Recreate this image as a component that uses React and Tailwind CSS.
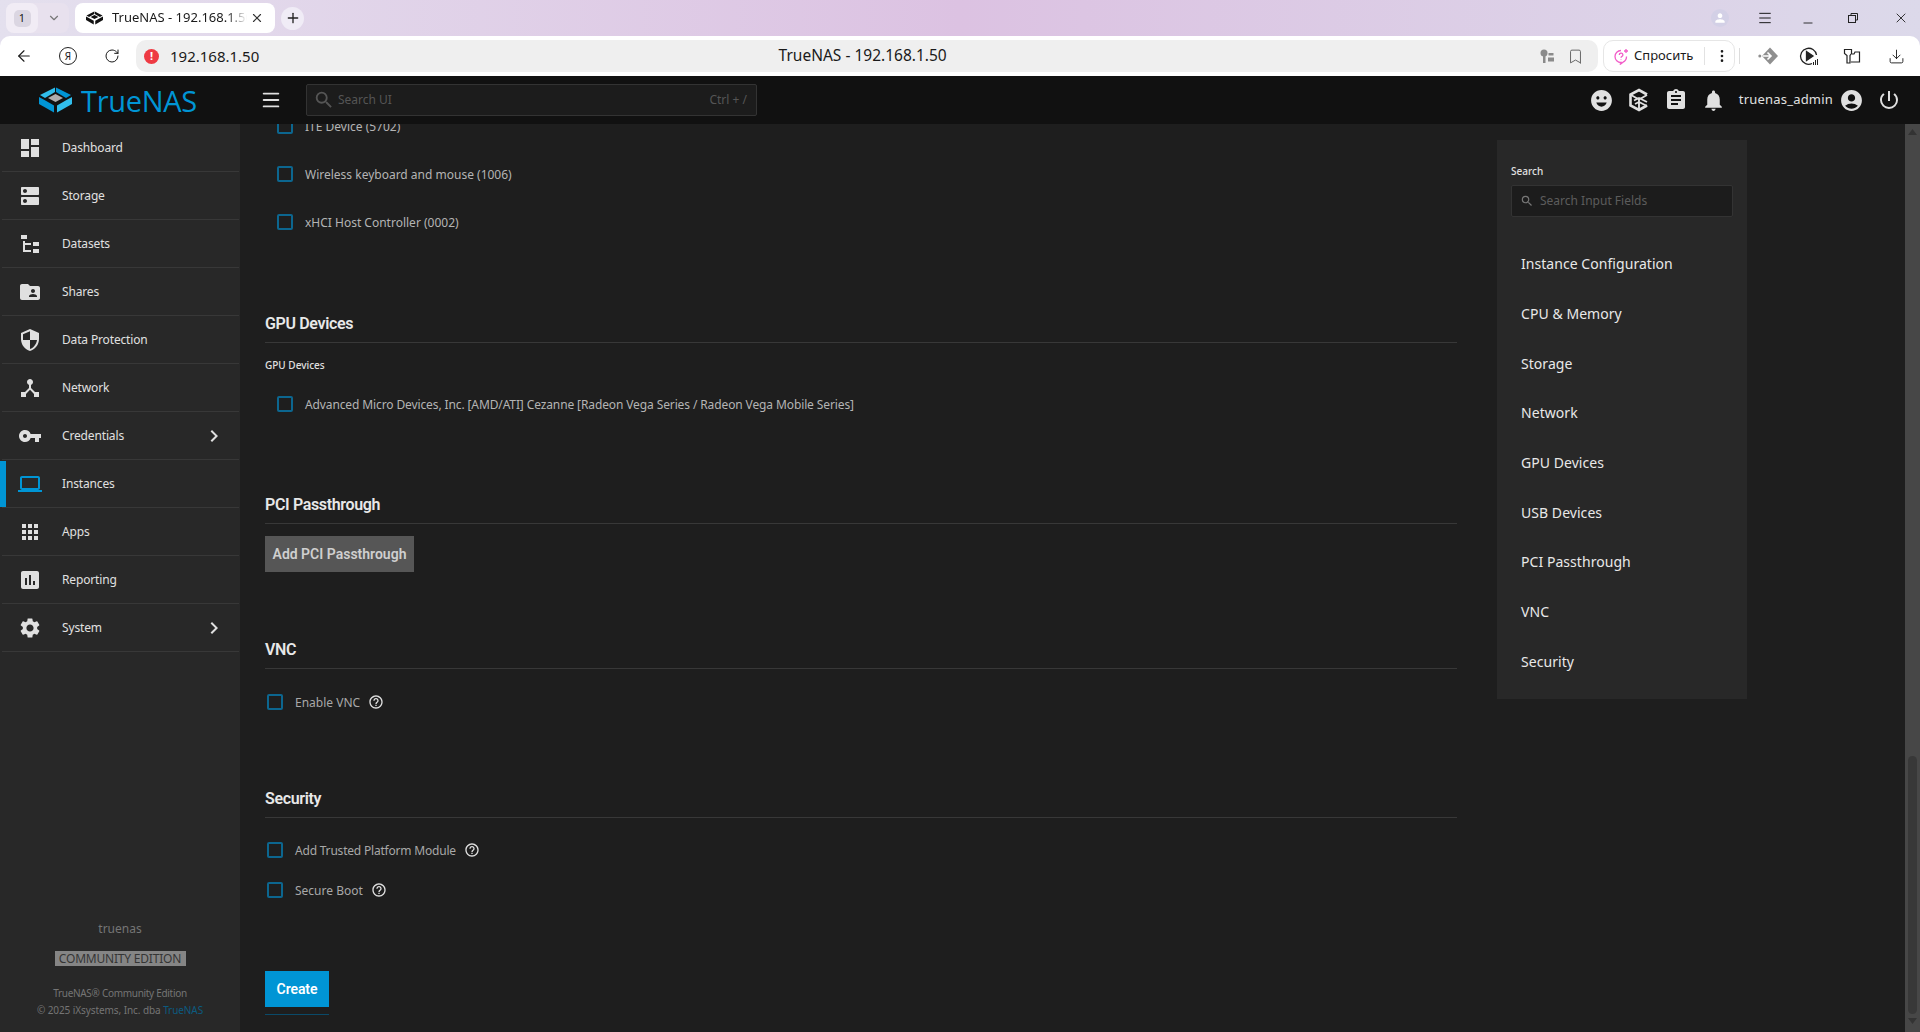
import React from "react";
import { ArrowLeft, RotateCw, Bookmark, ChevronDown, Plus, X, Menu, Minus, MoreVertical, Download } from "lucide-react";
import {
  MdDashboard, MdDns, MdFolderShared, MdSecurity, MdDeviceHub, MdVpnKey, MdLaptop, MdApps,
  MdAssessment, MdSettings, MdChevronRight, MdSearch, MdHelpOutline, MdEmojiEmotions, MdAssignment,
  MdNotifications, MdAccountCircle, MdPowerSettingsNew, MdPerson,
} from "react-icons/md";

const FileTree = ({ size = 24, className = "" }) => (
  <svg width={size} height={size} viewBox="0 0 24 24" fill="currentColor" className={className}>
    <path d="M3,3H9V7H3V3M15,10H21V14H15V10M15,17H21V21H15V17M13,13H7V18H13V20H7L5,20V9H7V11H13V13Z" />
  </svg>
);

const navItems = [
  { label: "Dashboard", icon: MdDashboard },
  { label: "Storage", icon: MdDns },
  { label: "Datasets", icon: FileTree },
  { label: "Shares", icon: MdFolderShared },
  { label: "Data Protection", icon: MdSecurity },
  { label: "Network", icon: MdDeviceHub },
  { label: "Credentials", icon: MdVpnKey, more: true },
  { label: "Instances", icon: MdLaptop, active: true },
  { label: "Apps", icon: MdApps },
  { label: "Reporting", icon: MdAssessment },
  { label: "System", icon: MdSettings, more: true },
];

const anchors = ["Instance Configuration", "CPU & Memory", "Storage", "Network", "GPU Devices", "USB Devices", "PCI Passthrough", "VNC", "Security"];

const Logo = ({ mono, className }) => (
  <svg viewBox="0 0 33 26" className={className}>
    <polygon points="16,0.5 1,8 6,11 16,5" fill={mono ? "#111" : "#31beec"} />
    <polygon points="17,0.5 32,8 27,11 17,5" fill={mono ? "#111" : "#0095d5"} />
    <polygon points="16.5,7 24,11 16.5,15 9,11" fill={mono ? "#111" : "#aeadae"} />
    <polygon points="0,10 5.5,13 15,18.5 15,25.5 0,17" fill={mono ? "#111" : "#0095d5"} />
    <polygon points="33,10 27.5,13 18,18.5 18,25.5 33,17" fill={mono ? "#111" : "#31beec"} />
  </svg>
);

const TrueCommandIcon = () => (
  <svg viewBox="0 0 24 24" className="w-[24px] h-[24px]" fill="none" stroke="#e0e0e0" strokeWidth="2.6">
    <path d="M20 6.500 12 2 3.500 6.500v11L12 22l8-4.500" />
    <path d="M4 7l8 4.500L20 7M12 11.500V21M7 12.500l5-2.500 8 4M8 16l4-2 8 4" strokeWidth="1.9" />
  </svg>
);

const Checkbox = () => <span className="w-[16px] h-[16px] shrink-0 rounded-[2px] border-2 border-[#0c668f]" />;

const DeviceRow = ({ label, className = "", textClass = "" }) => (
  <div className={`h-[48px] flex items-center pl-[12px] gap-[12px] text-[12px] text-[#b4b4b4] ${className}`}>
    <Checkbox />
    <span className={`pt-px ${textClass}`}>{label}</span>
  </div>
);

const CheckRow = ({ label, textClass = "" }) => (
  <div className="h-[40px] flex items-center pl-[2px] gap-[12px] text-[12px] text-[#a8a8a8]">
    <Checkbox />
    <span className={`pt-px ${textClass}`}>{label}</span>
    <MdHelpOutline size={16} className="text-[#e0e0e0] -ml-[4px]" />
  </div>
);

const SectionTitle = ({ children, className = "" }) => (
  <div className={`h-[39px] pt-[2px] flex items-center border-b border-[#383838] font-['Roboto',sans-serif] text-[16px] font-semibold tracking-[-0.35px] text-[#e8e8e8] ${className}`}>
    {children}
  </div>
);

const BrowserChrome = () => (
  <div className="h-[76px] shrink-0 flex flex-col bg-gradient-to-r from-[#e4e0ee] via-[#dcc2e2] to-[#dcd9ea] font-['Noto_Sans',sans-serif] text-[#1a1a1a]">
    <div className="h-[36px] flex items-center pl-[6px] pr-[11px]">
      <div className="w-[63px] h-[30px] flex items-center rounded-lg bg-[#e8e1ee]">
        <span className="w-[32px] h-[30px] rounded-lg bg-[#f1ecf5] flex items-center justify-center">
          <span className="w-[17px] h-[17px] rounded-[5px] bg-[#dbd6e2] flex items-center justify-center text-[11px]">1</span>
        </span>
        <ChevronDown size={14} className="ml-[9px] text-[#777]" />
      </div>
      <div className="ml-[6px] w-[200px] h-[30px] flex items-center rounded-lg bg-white pl-[11px] pr-[11px]">
        <Logo mono className="w-[17px] h-[14px] shrink-0" />
        <span className="ml-[9px] text-[13px] whitespace-nowrap overflow-hidden w-[135px] [mask-image:linear-gradient(to_right,black_85%,transparent)]">TrueNAS - 192.168.1.50</span>
        <X size={14} className="ml-auto text-[#333]" />
      </div>
      <div className="ml-[6px] w-[23px] h-[23px] rounded-full bg-[#f0ecf6] flex items-center justify-center">
        <Plus size={16} className="text-[#222]" />
      </div>
      <div className="ml-auto flex items-center">
        <span className="w-[18px] h-[18px] rounded-full bg-[#d3d0e6] flex items-center justify-center">
          <MdPerson size={14} className="text-white" />
        </span>
        <Menu size={16} strokeWidth={1.5} className="ml-[28px]" />
        <Minus size={14} strokeWidth={1.5} className="ml-[28px] mt-[10px]" />
        <svg width="12" height="12" viewBox="0 0 12 12" fill="none" stroke="#222" className="ml-[32px]">
          <rect x="1.5" y="3.5" width="7" height="7" />
          <path d="M4 3V1.500h6.500V8H9" />
        </svg>
        <X size={16} strokeWidth={1.3} className="ml-[34px]" />
      </div>
    </div>
    <div className="h-[40px] bg-white rounded-t-[10px] flex items-center pl-[15px]">
      <ArrowLeft size={18} strokeWidth={1.5} />
      <span className="ml-[26px] w-[18px] h-[18px] rounded-full border border-[#222] flex items-center justify-center text-[10px]">Я</span>
      <RotateCw size={16} strokeWidth={1.5} className="ml-[27px]" />
      <div className="ml-[16px] w-[1462px] h-[32px] rounded-[10px] bg-[#efefef] flex items-center pl-[8px] pr-[14px]">
        <span className="w-[15px] h-[15px] rounded-full bg-[#ee3a43] text-white text-[11px] font-bold flex items-center justify-center">!</span>
        <span className="ml-[11px] text-[15px]">192.168.1.50</span>
        <span className="flex-1 text-center text-[15.5px] pr-[74px]">TrueNAS - 192.168.1.50</span>
        <svg width="14" height="14" viewBox="0 0 14 14" fill="#8a8a8a">
          <circle cx="4" cy="4" r="3.5" />
          <rect x="3" y="6" width="2.5" height="8" />
          <rect x="8.5" y="4" width="5" height="2.5" />
          <rect x="8" y="8.5" width="6" height="4" />
        </svg>
        <Bookmark size={17} strokeWidth={1.4} className="ml-[13px] text-[#666]" />
      </div>
      <div className="ml-[5px] w-[132px] h-[32px] rounded-[10px] border border-[#e6e6e6] flex items-center pl-[9px] text-[13px]">
        <svg width="17" height="17" viewBox="0 0 17 17" fill="none" stroke="#f25cc8" strokeWidth="1.3">
          <path d="M8 2.500a6 6 0 1 0 0 12l-1 2 3-2.300a6 6 0 0 0 3.500-5.700" />
          <path d="M6.300 7a1.800 1.800 0 1 1 2.400 1.600c-.5.3-.7.6-.7 1.200M8 11.500v.5" />
          <path d="M13 1v4M11 3h4" />
        </svg>
        <span className="ml-[4px]">Спросить</span>
        <span className="ml-[11px] h-[18px] w-px bg-[#e2e2e2]" />
        <MoreVertical size={16} className="ml-[9px]" />
      </div>
      <span className="ml-[4px] h-[16px] w-px bg-[#dcdcdc]" />
      <svg width="20" height="20" viewBox="0 0 20 20" className="ml-[18px]">
        <path d="M12 1.500 20 10l-8 8.500L4 10z" fill="#8f8f8f" />
        <circle cx="1.800" cy="10" r="1.500" fill="#8f8f8f" />
        <path d="M4.500 10h8.500M9.500 6.500 13 10l-3.500 3.500" fill="none" stroke="#fff" strokeWidth="1.600" />
      </svg>
      <svg width="20" height="20" viewBox="0 0 20 20" className="ml-[21px]" fill="none" stroke="#222" strokeWidth="1.3">
        <path d="M13 17.500A8 8 0 1 1 17.500 9" />
        <path d="M7.500 5.500 14 10l-6.500 4.500z" fill="#222" />
        <path d="M14.500 19v-3M16.500 19v-5M18.500 19v-6" strokeWidth="1" />
      </svg>
      <svg width="18" height="18" viewBox="0 0 18 18" fill="none" stroke="#222" strokeWidth="1.2" className="ml-[24px]">
        <path d="M1.500 2.500h7v4l-1.500 2V16H4V8.500l-2.500-2z" />
        <path d="M9 7h2l1-2h4.500v10H8" />
      </svg>
      <Download size={17} strokeWidth={1.3} className="ml-[27px]" />
    </div>
  </div>
);

const TopBar = () => (
  <div className="h-[48px] shrink-0 bg-[#111111] flex items-center pl-[39px] pr-[19px]">
    <Logo className="w-[33px] h-[26px] shrink-0" />
    <span className="ml-[9px] w-[180px] text-[29px] leading-none text-[#0095d5] font-['Open_Sans',sans-serif] tracking-[-0.3px]">TrueNAS</span>
    <Menu size={22} className="text-[#e0e0e0] -ml-[1px]" />
    <div className="ml-[24px] w-[451px] h-[32px] flex items-center bg-[#1c1c1c] border border-[#333333] rounded-[2px] pl-[6px] pr-[9px] text-[12px] text-[#555555]">
      <MdSearch size={22} className="text-[#555555]" />
      <span className="ml-[3px]">Search UI</span>
      <span className="ml-auto">Ctrl + /</span>
    </div>
    <div className="ml-auto flex items-center text-[#e0e0e0]">
      <MdEmojiEmotions size={25} />
      <span className="ml-[13px]"><TrueCommandIcon /></span>
      <MdAssignment size={24} className="ml-[13px]" />
      <MdNotifications size={25} className="ml-[13px]" />
      <span className="ml-[13px] text-[13px] tracking-[0.2px]">truenas_admin</span>
      <MdAccountCircle size={25} className="ml-[6px]" />
      <MdPowerSettingsNew size={24} className="ml-[13px]" />
    </div>
  </div>
);

const Sidebar = () => (
  <aside className="w-[240px] shrink-0 bg-[#282828] flex flex-col">
    <nav>
      {navItems.map(({ label, icon: Icon, more, active }) => (
        <div key={label} className="relative h-[48px] ml-[2px] mr-px flex items-center border-b border-[#383838] text-[12px] tracking-[-0.15px] text-[#e0e0e0]">
          {active && <span className="absolute -left-[2px] top-px bottom-0 w-[6px] bg-[#0095d5]" />}
          <span className={`w-[56px] pl-[16px] ${active ? "text-[#0095d5]" : "text-[#e0e0e0]"}`}>
            <Icon size={24} />
          </span>
          <span className="ml-[4px] pt-px">{label}</span>
          {more && <MdChevronRight size={24} className="ml-auto mr-[13px]" />}
        </div>
      ))}
    </nav>
    <div className="mt-auto pb-[16px] flex flex-col items-center text-[#757575]">
      <span className="text-[12px] leading-[14px]">truenas</span>
      <span className="mt-[15px] h-[15px] w-[131px] bg-[#858585] text-[#353535] text-[12px] tracking-[-0.2px] leading-[15px] text-center whitespace-nowrap">COMMUNITY EDITION</span>
      <span className="mt-[21px] text-[10px] leading-[12px] tracking-[-0.3px]">TrueNAS® Community Edition</span>
      <span className="mt-[5px] text-[10px] leading-[12px] tracking-[-0.08px]">© 2025 iXsystems, Inc. dba <span className="text-[#0c5b80]">TrueNAS</span></span>
    </div>
  </aside>
);

const FormColumn = () => (
  <div className="flex-1 min-w-0 pl-[25px] pr-[40px]">
    <DeviceRow label="ITE Device (5702)" className="-mt-[22px]" />
    <DeviceRow label="Wireless keyboard and mouse (1006)" />
    <DeviceRow label="xHCI Host Controller (0002)" />

    <SectionTitle className="mt-[58px]">GPU Devices</SectionTitle>
    <div className="h-[37px] flex items-end pb-[9px] text-[10px] leading-[12px] font-medium text-[#e0e0e0]">GPU Devices</div>
    <DeviceRow label="Advanced Micro Devices, Inc. [AMD/ATI] Cezanne [Radeon Vega Series / Radeon Vega Mobile Series]" textClass="tracking-[-0.115px]" />

    <SectionTitle className="mt-[57px]">PCI Passthrough</SectionTitle>
    <button className="mt-[12px] w-[149px] h-[36px] bg-[#565656] text-[#cfcfcf] font-['Roboto',sans-serif] text-[14px] font-semibold flex items-center justify-center">Add PCI Passthrough</button>

    <SectionTitle className="mt-[58px]">VNC</SectionTitle>
    <div className="mt-[13px]"><CheckRow label="Enable VNC" /></div>

    <SectionTitle className="mt-[57px]">Security</SectionTitle>
    <div className="mt-[12px]">
      <CheckRow label="Add Trusted Platform Module" textClass="tracking-[-0.2px]" />
      <CheckRow label="Secure Boot" />
    </div>

    <button className="mt-[61px] w-[64px] h-[36px] bg-[#0095d5] text-white font-['Roboto',sans-serif] text-[14px] font-semibold tracking-[-0.1px] flex items-center justify-center">Create</button>
    <div className="mt-[7px] w-[64px] h-px bg-[#0a4a69]" />
  </div>
);

const AnchorPanel = () => (
  <div className="mt-[16px] mr-[158px] w-[250px] h-[559px] shrink-0 bg-[#282828] px-[14px] pt-[25px]">
    <div className="text-[10px] leading-[12px] font-medium text-[#e0e0e0]">Search</div>
    <div className="mt-[8px] h-[32px] flex items-center bg-[#1c1c1c] border border-[#333333] rounded-[2px] pl-[8px] text-[12px] text-[#5c5c5c]">
      <MdSearch size={14} className="text-[#777777]" />
      <span className="ml-[6px]">Search Input Fields</span>
    </div>
    <div className="mt-[22px] pl-[10px]">
      {anchors.map((a) => (
        <div key={a} className="h-[49.7px] flex items-center text-[14px] tracking-[0.05px] text-[#e8e8e8]">{a}</div>
      ))}
    </div>
  </div>
);

const ScrollBar = () => (
  <div className="w-[15px] shrink-0 bg-[#474747] flex flex-col items-center">
    <svg width="9" height="6" viewBox="0 0 9 6" fill="#333" className="mt-[5px]"><path d="M4.500 0 9 6H0z" /></svg>
    <div className="mt-[621px] w-[9px] h-[258px] rounded-full bg-[#383838]" />
    <svg width="9" height="6" viewBox="0 0 9 6" fill="#333" className="mt-[4px]"><path d="M4.500 6 9 0H0z" /></svg>
  </div>
);

export default function App() {
  return (
    <div className="w-[1920px] h-[1032px] overflow-hidden flex flex-col bg-[#1e1e1e] font-['Noto_Sans',sans-serif]">
      <BrowserChrome />
      <TopBar />
      <div className="flex-1 min-h-0 flex">
        <Sidebar />
        <main className="flex-1 min-w-0 flex overflow-hidden">
          <FormColumn />
          <AnchorPanel />
        </main>
        <ScrollBar />
      </div>
    </div>
  );
}
